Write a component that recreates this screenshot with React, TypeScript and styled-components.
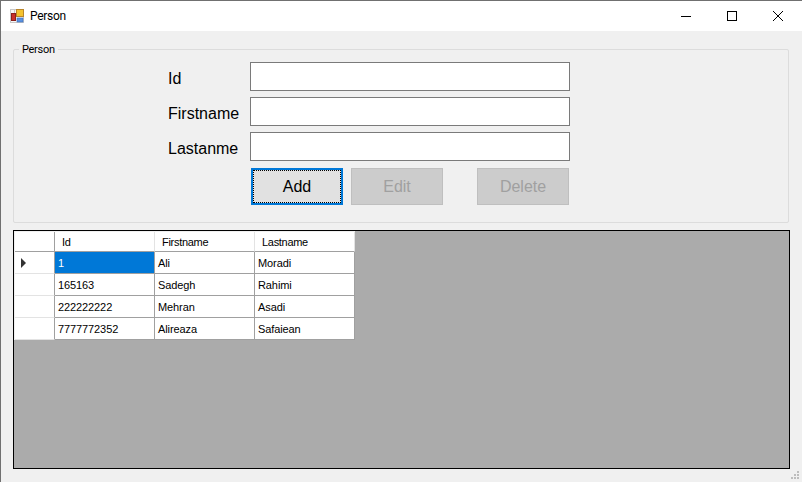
import styled, { createGlobalStyle } from "styled-components"

const GlobalStyle = createGlobalStyle`
  html, body {
    margin: 0;
    padding: 0;
    background: #f0f0f0;
  }
  * {
    box-sizing: border-box;
  }
`

const people = [
  { id: "1", firstname: "Ali", lastname: "Moradi" },
  { id: "165163", firstname: "Sadegh", lastname: "Rahimi" },
  { id: "222222222", firstname: "Mehran", lastname: "Asadi" },
  { id: "7777772352", firstname: "Alireaza", lastname: "Safaiean" },
]

const fields = ["Id", "Firstname", "Lastanme"]

export default function App() {
  return (
    <>
      <GlobalStyle />
      <Window>
        <TitleBar>
          <AppIcon />
          <Title>Person</Title>
          <WindowButtons>
            <WindowButton aria-label="Minimize">
              <svg width="12" height="12" viewBox="0 0 12 12">
                <path d="M1 6.5h10" stroke="#000" fill="none" />
              </svg>
            </WindowButton>
            <WindowButton aria-label="Maximize">
              <svg width="12" height="12" viewBox="0 0 12 12">
                <rect x="1.5" y="1.5" width="9" height="9" stroke="#000" fill="none" />
              </svg>
            </WindowButton>
            <WindowButton aria-label="Close">
              <svg width="12" height="12" viewBox="0 0 12 12">
                <path d="M1 1l10 10M11 1L1 11" stroke="#000" fill="none" />
              </svg>
            </WindowButton>
          </WindowButtons>
        </TitleBar>
        <Content>
          <GroupBox>
            <Legend>Person</Legend>
            <Form>
              {fields.map((f) => (
                <FormRow key={f}>
                  <FieldLabel>{f}</FieldLabel>
                  <TextBox />
                </FormRow>
              ))}
              <Buttons>
                <ActionButton $focused>Add</ActionButton>
                <ActionButton disabled>Edit</ActionButton>
                <ActionButton disabled $far>
                  Delete
                </ActionButton>
              </Buttons>
            </Form>
          </GroupBox>
          <GridView>
            <Table>
              <HeaderRow>
                <RowHeader $top />
                <HeaderCell>Id</HeaderCell>
                <HeaderCell>Firstname</HeaderCell>
                <HeaderCell>Lastname</HeaderCell>
              </HeaderRow>
              {people.map((p, i) => (
                <DataRow key={p.id}>
                  <RowHeader>{i === 0 && <Arrow />}</RowHeader>
                  <Cell $selected={i === 0}>{p.id}</Cell>
                  <Cell>{p.firstname}</Cell>
                  <Cell>{p.lastname}</Cell>
                </DataRow>
              ))}
            </Table>
          </GridView>
        </Content>
        <SizeGrip>
          <svg width="12" height="12" viewBox="0 0 12 12">
            <path d="M9 1h2v2H9zM6 4h2v2H6zM9 4h2v2H9zM3 7h2v2H3zM6 7h2v2H6zM9 7h2v2H9z" fill="#bdbdbd" />
          </svg>
        </SizeGrip>
      </Window>
    </>
  )
}

const AppIcon = () => (
  <svg width="14" height="14" viewBox="0 0 14 14" style={{ flex: "none" }}>
    <rect x="0.5" y="0.5" width="13" height="13" fill="#f6f6f6" stroke="#c8c8c8" />
    <path d="M0 4.5h6M4.5 0v4" stroke="#c8c8c8" fill="none" />
    <rect x="1.5" y="4.5" width="4" height="7" fill="#c8302a" stroke="#8c1f1c" />
    <rect x="6.5" y="0.5" width="7" height="7" fill="#f4c22e" stroke="#b9852a" />
    <rect x="7" y="9" width="6" height="4" fill="#5b92e0" stroke="#3f6db5" strokeWidth="0.6" />
  </svg>
)

const Window = styled.div`
  position: relative;
  width: 802px;
  height: 482px;
  display: flex;
  flex-direction: column;
  background: #f0f0f0;
  border-top: 1px solid #707070;
  border-left: 1px solid #707070;
  font-family: "Liberation Sans", Arial, sans-serif;
  overflow: hidden;
`

const TitleBar = styled.div`
  height: 30px;
  flex: none;
  display: flex;
  align-items: center;
  background: #fff;
  padding: 0 1px 0 9px;
`

const Title = styled.span`
  margin-left: 6px;
  font-family: Roboto, "Open Sans", sans-serif;
  font-size: 12px;
  letter-spacing: -0.3px;
  color: #000;
`

const WindowButtons = styled.div`
  margin-left: auto;
  display: flex;
`

const WindowButton = styled.div`
  width: 46px;
  height: 30px;
  display: flex;
  align-items: center;
  justify-content: center;
`

const Content = styled.div`
  flex: 1;
  display: flex;
  flex-direction: column;
  padding: 18px 12px 12px 12px;
`

const GroupBox = styled.fieldset`
  position: relative;
  height: 174px;
  width: 776px;
  margin: 0;
  padding: 12px 0 0 154px;
  border: 1px solid #dcdcdc;
  border-radius: 2px;
`

const Legend = styled.span`
  position: absolute;
  top: -7px;
  left: 5px;
  padding: 0 3px;
  background: #f0f0f0;
  font-family: Roboto, "Open Sans", sans-serif;
  font-size: 11px;
  letter-spacing: -0.3px;
  line-height: 14px;
  color: #000;
`

const Form = styled.div`
  display: flex;
  flex-direction: column;
  gap: 6px;
`

const FormRow = styled.div`
  display: flex;
  align-items: center;
  height: 29px;
`

const FieldLabel = styled.label`
  width: 82px;
  padding-top: 4px;
  font-size: 16px;
  color: #000;
`

const TextBox = styled.div`
  width: 320px;
  height: 29px;
  background: #fff;
  border: 1px solid #7a7a7a;
`

const Buttons = styled.div`
  display: flex;
  gap: 8px;
  margin-left: 83px;
  margin-top: 1px;
`

const ActionButton = styled.button<{ $focused?: boolean; $far?: boolean }>`
  width: 92px;
  height: 37px;
  margin-left: ${(p) => (p.$far ? "26px" : "0")};
  padding: 0;
  font-family: "Liberation Sans", Arial, sans-serif;
  font-size: 16px;
  color: #000;
  background: #e1e1e1;
  border: 2px solid #0078d7;
  outline: ${(p) => (p.$focused ? "1px dotted #000" : "none")};
  outline-offset: -3px;

  &:disabled {
    color: #a0a0a0;
    background: #cccccc;
    border: 1px solid #bfbfbf;
  }
`

const GridView = styled.div`
  width: 777px;
  height: 239px;
  margin-top: 7px;
  background: #ababab;
  border: 1px solid #000;
`

const Table = styled.div`
  display: flex;
  flex-direction: column;
  width: 341px;
  border-top: 1px solid #f0f0f0;
  border-left: 1px solid #f0f0f0;
  font-size: 11px;
  color: #000;
`

const HeaderRow = styled.div`
  display: grid;
  grid-template-columns: 40px 100px 100px 100px;
  height: 20px;
`

const DataRow = styled.div`
  display: grid;
  grid-template-columns: 40px 100px 100px 100px;
  height: 22px;
`

const RowHeader = styled.div<{ $top?: boolean }>`
  position: relative;
  background: #fff;
  border-right: 1px solid #a0a0a0;
  border-bottom: 1px solid ${(p) => (p.$top ? "#a0a0a0" : "#e3e3e3")};
`

const Arrow = styled.div`
  position: absolute;
  left: 6px;
  top: 6px;
  width: 0;
  height: 0;
  border-top: 5px solid transparent;
  border-bottom: 5px solid transparent;
  border-left: 5px solid #333;
`

const HeaderCell = styled.div`
  display: flex;
  align-items: center;
  padding-left: 7px;
  background: #fff;
  letter-spacing: -0.3px;
  border-right: 1px solid #e3e3e3;
  border-bottom: 1px solid #a0a0a0;
`

const Cell = styled.div<{ $selected?: boolean }>`
  display: flex;
  align-items: center;
  padding-left: 3px;
  letter-spacing: -0.1px;
  background: ${(p) => (p.$selected ? "#0078d7" : "#fff")};
  color: ${(p) => (p.$selected ? "#fff" : "#000")};
  border-right: 1px solid #a0a0a0;
  border-bottom: 1px solid #a0a0a0;
`

const SizeGrip = styled.div`
  position: absolute;
  right: 2px;
  bottom: 0;
  width: 12px;
  height: 12px;
  line-height: 0;
`
